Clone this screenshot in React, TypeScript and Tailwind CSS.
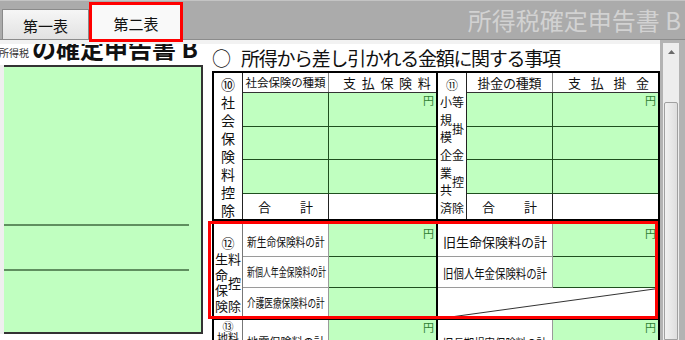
import React from "react";

const GREEN = "bg-[#c0ffc0]";

function Yen({ pt = "pt-[2px]" }: { pt?: string }) {
  return (
    <div className={`flex justify-end pr-[2px] ${pt} text-[11px] leading-[11px] text-[#2e7d32]`}>
      円
    </div>
  );
}

function Sq({ children, cls }: { children: React.ReactNode; cls: string }) {
  return <span className={`inline-block origin-left whitespace-nowrap leading-none ${cls}`}>{children}</span>;
}

function Col({ chars, cls }: { chars: string; cls: string }) {
  return (
    <div className={`flex flex-col justify-between ${cls}`}>
      {chars.split("").map((c, i) => (
        <span key={i} className="block text-center">
          {c}
        </span>
      ))}
    </div>
  );
}

function Block({
  label,
  headB,
  headC,
  wC,
  cls = "",
}: {
  label: React.ReactNode;
  headB: React.ReactNode;
  headC: React.ReactNode;
  wC: string;
  cls?: string;
}) {
  const rows = ["h-[34px]", "h-[33px]", "h-[34px]"];
  return (
    <div className={`flex bg-white ${cls}`}>
      <div className="w-[29px] shrink-0 border-r border-[#222]">{label}</div>
      <div className="flex flex-col">
        <div className="flex h-[20px] shrink-0 border-b border-[#333]">
          <div className="w-[86px] shrink-0 border-r border-[#8a8a8a] flex items-center justify-center whitespace-nowrap">
            {headB}
          </div>
          <div className={`${wC} shrink-0 flex items-center whitespace-nowrap overflow-hidden`}>{headC}</div>
        </div>
        {rows.map((h, i) => (
          <div key={i} className={`flex shrink-0 ${h} border-b border-[#1f4f1f] ${GREEN}`}>
            <div className="w-[86px] shrink-0 border-r border-[#1f4f1f]" />
            <div className={`${wC} shrink-0`}>{i === 0 && <Yen />}</div>
          </div>
        ))}
        <div className="flex h-[25px] shrink-0">
          <div className="w-[86px] shrink-0 border-r border-[#222] flex items-center justify-center gap-[29px] text-[13px] leading-none">
            <span>合</span>
            <span>計</span>
          </div>
          <div className={`${wC} shrink-0`} />
        </div>
      </div>
    </div>
  );
}

export default function App() {
  return (
    <div className="w-[685px] h-[340px] overflow-hidden bg-[#ababab] text-[#111] font-['Noto_Sans_CJK_JP',sans-serif]">
      {/* tab bar */}
      <div className="h-[40px] border-t border-[#c4c4c4] border-b border-b-[#8c8c8c] flex items-end pl-[2px]">
        <div className="w-[87px] h-[30px] pt-[2px] border border-b-0 border-[#8a8a8a] bg-gradient-to-b from-[#f6f6f6] to-[#e2e2e2] flex items-center justify-center text-[15px] leading-none">
          第一表
        </div>
        <div className="relative z-10 w-[94px] h-[40px] -mb-[3px] pt-[3px] border-[3px] border-[#ff0000] bg-[#f9f9f9] flex items-center justify-center text-[15px] leading-none">
          第二表
        </div>
        <div className="ml-auto self-center pr-[4px] text-[24px] leading-none text-[#d2d2d2]">所得税確定申告書 B</div>
      </div>

      <div className="flex h-[300px]">
        {/* document area */}
        <div className="w-[660px] shrink-0 flex flex-col bg-white">
          <div className="h-[4px] shrink-0 bg-[#f2f2f2]" />
          <div className="flex-1 min-h-0 overflow-hidden flex items-start">
            {/* left page (previous sheet, scrolled) */}
            <div className="w-[203px] shrink-0">
              <div className="-mt-[8px] h-[24px] flex items-end leading-none whitespace-nowrap">
                <span className="-ml-[1px] mb-[2px] text-[10px] text-[#333]">所得税</span>
                <span className="ml-[3px] text-[24px] font-bold">の確定申告書 B</span>
              </div>
              <div className="mt-[5px] flex">
                <div className="w-[4px] h-[269px] bg-[#efefef]" />
                <div className={`w-[199px] h-[269px] border-t-2 border-r-2 border-b-2 border-[#333] ${GREEN}`}>
                  <div className="h-[157px]" />
                  <div className="h-[2px] mr-[12px] bg-[#5f8f5f]" />
                  <div className="h-[43px]" />
                  <div className="h-[2px] mr-[12px] bg-[#5f8f5f]" />
                </div>
              </div>
            </div>

            {/* right page */}
            <div className="ml-[9px] shrink-0">
              <div className="h-[27px] flex items-center text-[19px] leading-none whitespace-nowrap">
                <span>○</span>
                <span className="ml-[10px] tracking-[-1.3px]">所得から差し引かれる金額に関する事項</span>
              </div>

              <div className="relative">
                <div className="w-[448px] border-2 border-black">
                  {/* section 10 / 11 */}
                  <div className="flex border-b-2 border-black">
                    <Block
                      cls="border-r-2 border-black"
                      wC="w-[107px]"
                      label={
                        <div className="flex flex-col items-center pt-[2px] text-[14px] leading-[18px]">
                          {"⑩社会保険料控除".split("").map((c, i) => (
                            <span key={i}>{c}</span>
                          ))}
                        </div>
                      }
                      headB={<span className="text-[11.5px] leading-none tracking-[-0.1px]">社会保険の種類</span>}
                      headC={<span className="pl-[14px] text-[13px] leading-none tracking-[5.7px]">支払保険料</span>}
                    />
                    <Block
                      wC="w-[105px]"
                      label={
                        <div className="flex flex-col items-center text-[12px] leading-[12px]">
                          <div className="h-[23px] flex items-center">⑪</div>
                          <div className="flex h-[118px] w-[24px]">
                            <Col chars="小規模企業共済" cls="w-[12px]" />
                            <Col chars="等掛金控除" cls="w-[12px]" />
                          </div>
                        </div>
                      }
                      headB={<span className="text-[13px] leading-none tracking-[-0.25px]">掛金の種類</span>}
                      headC={<span className="pl-[15px] text-[13px] leading-none tracking-[9.7px]">支払掛金</span>}
                    />
                  </div>

                  {/* section 12 */}
                  <div className="flex h-[99px] border-b-2 border-black">
                    <div className="flex border-r-2 border-black">
                      <div className="w-[29px] shrink-0 border-r border-[#777] flex flex-col items-center pt-[15px] text-[13px] leading-[13px]">
                        <div>⑫</div>
                        <div className="mt-[3px] flex h-[60px] w-[26px]">
                          <Col chars="生命保険" cls="w-[13px]" />
                          <Col chars="料控除" cls="w-[13px]" />
                        </div>
                      </div>
                      <div className="flex flex-col">
                        <div className="flex h-[36px] shrink-0">
                          <div className="w-[86px] shrink-0 border-r border-b border-[#9a9a9a] pl-[4px] pt-[6px] flex items-center overflow-hidden">
                            <Sq cls="text-[12px] scale-x-[0.81]">新生命保険料の計</Sq>
                          </div>
                          <div className={`w-[107px] shrink-0 border-b border-[#1f4f1f] ${GREEN}`}>
                            <Yen pt="pt-[7px]" />
                          </div>
                        </div>
                        <div className="flex h-[31px] shrink-0">
                          <div className="w-[86px] shrink-0 border-r border-b border-[#9a9a9a] pl-[4px] flex items-center overflow-hidden">
                            <Sq cls="text-[12px] scale-x-[0.66]">新個人年金保険料の計</Sq>
                          </div>
                          <div className={`w-[107px] shrink-0 border-b border-[#1f4f1f] ${GREEN}`} />
                        </div>
                        <div className="flex h-[30px] shrink-0">
                          <div className="w-[86px] shrink-0 border-r border-[#9a9a9a] pl-[4px] flex items-center overflow-hidden">
                            <Sq cls="text-[12px] scale-x-[0.72]">介護医療保険料の計</Sq>
                          </div>
                          <div className={`w-[107px] shrink-0 ${GREEN}`} />
                        </div>
                      </div>
                    </div>
                    <div className="flex flex-col">
                      <div className="flex h-[36px] shrink-0">
                        <div className="w-[115px] shrink-0 border-r border-b border-[#9a9a9a] pl-[5px] pt-[6px] flex items-center overflow-hidden">
                          <Sq cls="text-[13px]">旧生命保険料の計</Sq>
                        </div>
                        <div className={`w-[105px] shrink-0 border-b border-[#1f4f1f] ${GREEN}`}>
                          <Yen pt="pt-[7px]" />
                        </div>
                      </div>
                      <div className="flex h-[31px] shrink-0">
                        <div className="w-[115px] shrink-0 border-r border-b border-[#9a9a9a] pl-[5px] flex items-center overflow-hidden">
                          <Sq cls="text-[13px] scale-x-[0.8]">旧個人年金保険料の計</Sq>
                        </div>
                        <div className={`w-[105px] shrink-0 border-b border-[#1f4f1f] ${GREEN}`} />
                      </div>
                      <div className="h-[30px] w-[220px] shrink-0 bg-white">
                        <svg className="block" width="220" height="30" viewBox="0 0 220 30">
                          <line x1="9" y1="29.5" x2="220" y2="0.5" stroke="#333" strokeWidth="1" />
                        </svg>
                      </div>
                    </div>
                  </div>

                  {/* section 13 */}
                  <div className="flex h-[40px]">
                    <div className="flex border-r-2 border-black">
                      <div className="w-[29px] shrink-0 border-r border-[#777] flex flex-col items-center pt-[1px] text-[11px] leading-[11px]">
                        <div>⑬</div>
                        <div className="flex w-[22px]">
                          <span className="w-[11px]">地</span>
                          <span className="w-[11px]">料</span>
                        </div>
                      </div>
                      <div className="w-[86px] shrink-0 border-r border-[#9a9a9a] pl-[4px] pt-[4px] flex items-center overflow-hidden">
                        <Sq cls="text-[12px] scale-x-[0.93]">地震保険料の計</Sq>
                      </div>
                      <div className={`w-[107px] shrink-0 ${GREEN}`}>
                        <Yen pt="pt-[2px]" />
                      </div>
                    </div>
                    <div className="flex">
                      <div className="w-[115px] shrink-0 border-r border-[#9a9a9a] pl-[5px] pt-[4px] flex items-center overflow-hidden">
                        <Sq cls="text-[13px] scale-x-[0.8]">旧長期損害保険料の計</Sq>
                      </div>
                      <div className={`w-[105px] shrink-0 ${GREEN}`}>
                        <Yen pt="pt-[2px]" />
                      </div>
                    </div>
                  </div>
                </div>

                {/* red highlight frame */}
                <div className="absolute left-[-4px] top-[150px] w-[450px] h-[98px] border-[3px] border-[#ff0000] pointer-events-none" />
              </div>
            </div>
          </div>
        </div>

        {/* scrollbar gutter */}
        <div className="w-[25px] bg-[#b3b3b3] pl-[3px] pt-[3px]">
          <div className="w-[16px] h-full bg-[#ededed] flex flex-col">
            <div className="h-[17px] shrink-0 flex items-center justify-center">
              <svg width="7" height="4" viewBox="0 0 7 4">
                <polygon points="0,4 3.5,0 7,4" fill="#6a6a6a" />
              </svg>
            </div>
            <div className="h-[42px] shrink-0" />
            <div className="flex-1 mx-[1px] bg-gradient-to-r from-[#f2f2f2] to-[#dedede] border border-[#a0a0a0] rounded-t-[2px]" />
          </div>
        </div>
      </div>
    </div>
  );
}
